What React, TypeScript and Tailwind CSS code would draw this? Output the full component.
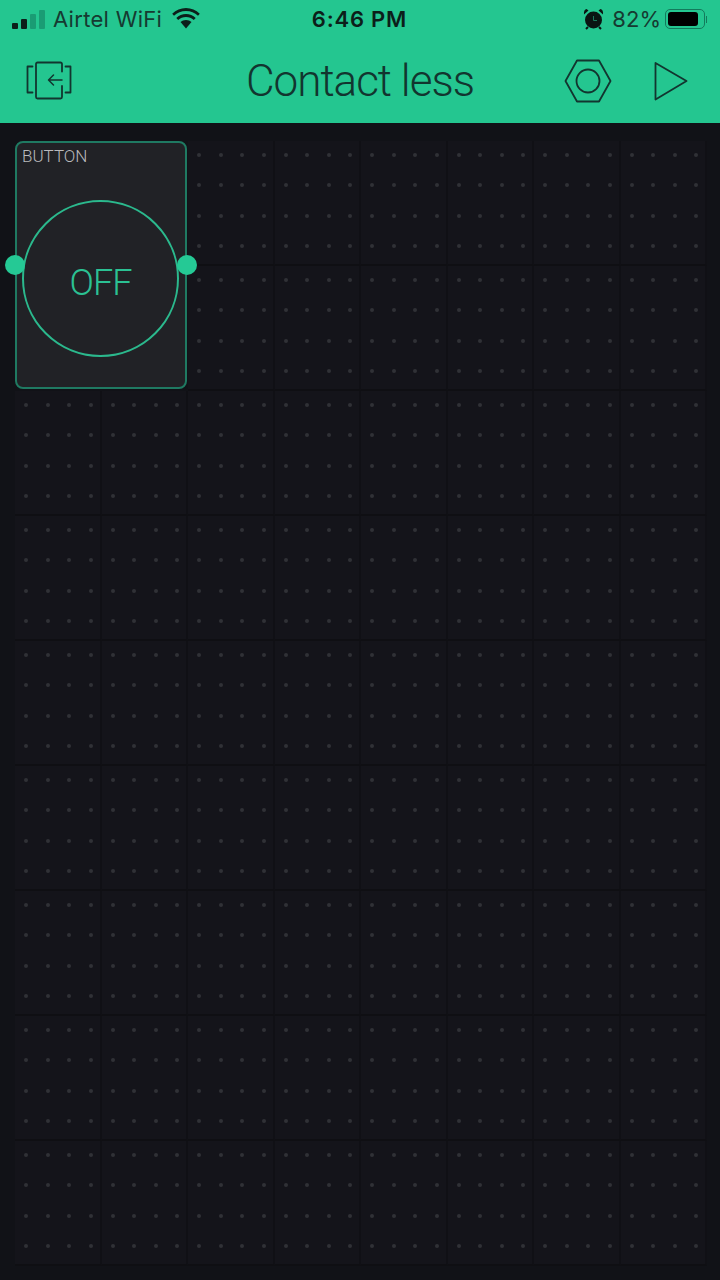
import React from 'react';

const Wifi = () => (
  <svg width="30" height="22" viewBox="0 0 30 22" fill="#0c1f1a">
    <path d="M15 3c4.600 0 8.800 1.800 12 4.800l1.800-2.100C25 2.100 20.300 0 15 0S5 2.100 1.200 5.700L3 7.800C6.200 4.800 10.400 3 15 3z" />
    <path d="M15 9c3 0 5.700 1.200 7.800 3.100l1.900-2.200C22.100 7.500 18.700 6 15 6s-7.100 1.500-9.700 3.900l1.900 2.200C9.300 10.200 12 9 15 9z" />
    <path d="M15 12c-2.100 0-4 .8-5.500 2.100L15 20.500l5.500-6.400C19 12.800 17.100 12 15 12z" />
  </svg>
);

const Alarm = () => (
  <svg width="21" height="22" viewBox="0 0 21 22" fill="#0a1512">
    <circle cx="10.500" cy="12" r="8.500" />
    <path d="M1 6.500 5.500 2.500 3.500 1C2 1.200.5 3 1 6.500zM20 6.500l-4.500-4 2-1.500c1.500.2 3 2 2.500 5.500z" />
    <path d="M10.500 8v4.500H14" fill="none" stroke="#1a7a5c" strokeWidth="1" />
    <path d="M5 19l-2 2M16 19l2 2" stroke="#0a1512" strokeWidth="2" />
  </svg>
);

const DeviceIcon = () => (
  <svg width="46" height="40" viewBox="0 0 46 40" fill="none" stroke="#12352f" strokeWidth="1.800" strokeLinecap="round" strokeLinejoin="round">
    <path d="M6.500 5.500H1.500v26h5" />
    <path d="M39.500 5.500h5v26h-5" />
    <path d="M36 10.500V3a1.500 1.500 0 0 0-1.500-1.500H11.500A1.500 1.500 0 0 0 10 3v33a1.500 1.500 0 0 0 1.500 1.500h23a1.500 1.500 0 0 0 1.500-1.500V25" />
    <path d="M36 19H23M27.500 14l-5 5 5 5" strokeWidth="1.500" />
  </svg>
);

const HexIcon = () => (
  <svg width="48" height="44" viewBox="0 0 48 44" fill="none" stroke="#12352f" strokeWidth="1.800" strokeLinejoin="round">
    <path d="M13 1.500h22L46.500 22 35 42.500H13L1.500 22z" />
    <circle cx="24" cy="22" r="11.500" />
  </svg>
);

const PlayIcon = () => (
  <svg width="34" height="40" viewBox="0 0 34 40" fill="none" stroke="#12352f" strokeWidth="1.800" strokeLinejoin="round">
    <path d="M1.500 2 32.500 20 1.500 38.500z" />
  </svg>
);

function GridCell() {
  return (
    <div className="grid grid-cols-[repeat(4,21.500px)] grid-rows-[repeat(4,30.300px)] pl-[9px] pt-[12px] border-r-2 border-b-2 border-r-[#101015] border-b-[#0f0f13] bg-[#14141a]">
      {Array.from({ length: 16 }).map((_, i) => (
        <div key={i} className="size-[4px] rounded-full bg-[#303136] blur-[0.5px]" />
      ))}
    </div>
  );
}

export default function App() {
  return (
    <div className="w-[720px] h-[1280px] overflow-hidden bg-[#111217] font-['Inter',sans-serif]">
      <header className="h-[123px] bg-[#24c690] text-[#0c1f1a]">
        {/* status bar */}
        <div className="h-[38px] pl-[12px] pr-[13px] grid grid-cols-3 items-center">
          <div className="flex items-center">
            <div className="flex items-end gap-[3px] h-[20px]">
              <span className="w-[6px] h-[6px] rounded-[1px] bg-[#0c1f1a]" />
              <span className="w-[6px] h-[10px] rounded-[1px] bg-[#0c1f1a]" />
              <span className="w-[6px] h-[15px] rounded-[1px] bg-[#1a9c74]" />
              <span className="w-[6px] h-[19px] rounded-[1px] bg-[#1a9c74]" />
            </div>
            <span className="ml-[8px] text-[22px] leading-none tracking-[0.3px] text-[#163a31] whitespace-nowrap">Airtel WiFi</span>
            <span className="ml-[9px]"><Wifi /></span>
          </div>
          <div className="text-center text-[22px] leading-none font-semibold text-[#0c1f1a] tracking-[0.8px] whitespace-nowrap">6:46 PM</div>
          <div className="flex items-center justify-end">
            <Alarm />
            <span className="ml-[8px] text-[22px] leading-none text-[#163a31]">82%</span>
            <div className="ml-[4px] w-[40px] h-[20px] rounded-[5px] border border-[#137a5c] p-[2px]">
              <div className="w-[30px] h-full rounded-[3px] bg-black" />
            </div>
            <span className="ml-[1px] w-[1px] h-[7px] bg-[#137a5c]" />
          </div>
        </div>
        {/* title row */}
        <div className="h-[85px] pl-[26px] pr-[32px] flex items-center">
          <DeviceIcon />
          <h1 className="ml-[174px] text-[44px] leading-none font-light font-['Roboto',sans-serif] text-[#12352f] tracking-[-1px] whitespace-nowrap">Contact less</h1>
          <div className="ml-auto mr-[42px]"><HexIcon /></div>
          <PlayIcon />
        </div>
      </header>

      <main className="pt-[18px] pl-[15px]">
        <div className="grid grid-cols-[repeat(8,86.500px)] grid-rows-[repeat(9,125px)]">
          {/* button widget takes two by two cells */}
          <div className="relative col-span-2 row-span-2 w-[172px] h-[248px] rounded-[8px] border-2 border-[#1f7a62] bg-[#212226] px-[5px]">
            <div className="pt-[2px] text-[17px] leading-[22px] font-['Roboto',sans-serif] font-light text-[#b9babd]">BUTTON</div>
            <div className="mt-[33px] w-[157px] h-[157px] rounded-full border-2 border-[#2bb98d] flex items-center justify-center">
              <span className="pt-[8px] text-[36px] leading-none font-['Roboto',sans-serif] font-light tracking-[-1px] text-[#2bc193]">OFF</span>
            </div>
            <span className="absolute left-[-12px] top-[112px] size-[20px] rounded-full bg-[#25c995]" />
            <span className="absolute right-[-12px] top-[112px] size-[20px] rounded-full bg-[#25c995]" />
          </div>
          {Array.from({ length: 68 }).map((_, i) => (
            <GridCell key={i} />
          ))}
        </div>
      </main>
    </div>
  );
}
